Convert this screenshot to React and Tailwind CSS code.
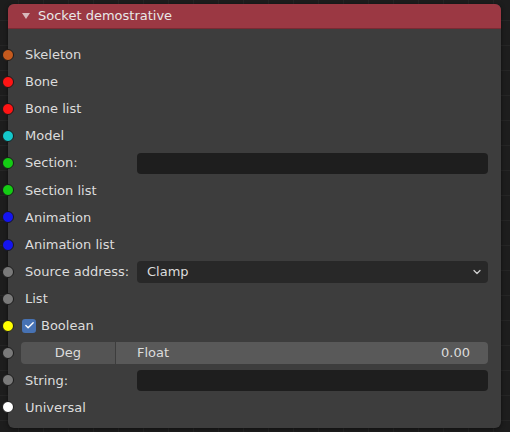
import { ChevronDown, Check } from 'lucide-react'

const rows = [
  { label: 'Skeleton', color: '#c65a1e' },
  { label: 'Bone', color: '#ff1414' },
  { label: 'Bone list', color: '#ff1414' },
  { label: 'Model', color: '#14c8cc' },
  { label: 'Section:', color: '#14cc14', field: 'text' },
  { label: 'Section list', color: '#14cc14' },
  { label: 'Animation', color: '#1414f0' },
  { label: 'Animation list', color: '#1414f0' },
  { label: 'Source address:', color: '#7a7a7a', field: 'select' },
  { label: 'List', color: '#7a7a7a' },
  { label: 'Boolean', color: '#ffff00', field: 'bool' },
  { label: '', color: '#7a7a7a', field: 'float' },
  { label: 'String:', color: '#7a7a7a', field: 'text' },
  { label: 'Universal', color: '#ffffff' },
]

function Socket({ color }) {
  return (
    <span
      className="absolute left-[-6px] top-1/2 -translate-y-1/2 w-[12px] h-[12px] rounded-full border border-[#1a1a1a]"
      style={{ backgroundColor: color }}
    />
  )
}

function Row({ row }) {
  return (
    <div className="relative h-[27.15px] flex items-center pl-[17px] pr-[13px]">
      <Socket color={row.color} />
      {row.field === 'bool' ? (
        <div className="flex items-center gap-[5px] ml-[-3px]">
          <span className="w-[14px] h-[14px] rounded-[3px] bg-[#4772b3] flex items-center justify-center">
            <Check size={11} strokeWidth={3} className="text-white" />
          </span>
          <span>{row.label}</span>
        </div>
      ) : row.field === 'float' ? (
        <div className="flex-1 h-[22px] ml-[-4px] flex rounded-[4px] overflow-hidden">
          <div className="w-[95px] bg-[#545454] flex items-center justify-center border-r border-[#3d3d3d]">Deg</div>
          <div className="flex-1 bg-[#595959] flex items-center justify-between pl-[21px] pr-[18px]">
            <span>Float</span>
            <span>0.00</span>
          </div>
        </div>
      ) : (
        <>
          <span className="w-[112px] shrink-0">{row.label}</span>
          {row.field === 'text' && (
            <div className="flex-1 h-[21px] rounded-[4px] bg-[#1e1e1e]" />
          )}
          {row.field === 'select' && (
            <div className="flex-1 h-[22px] rounded-[4px] bg-[#282828] flex items-center justify-between pl-[10px] pr-[5px]">
              <span>Clamp</span>
              <ChevronDown size={12} strokeWidth={2.5} className="text-[#d0d0d0]" />
            </div>
          )}
        </>
      )}
    </div>
  )
}

export default function App() {
  return (
    <div
      className="w-[510px] h-[432px] bg-[#1d1d1d] pt-[4px] pl-[8px] overflow-hidden bg-[linear-gradient(to_right,#252525_1px,transparent_1px),linear-gradient(to_bottom,#252525_1px,transparent_1px)] bg-[size:25px_25px] bg-[position:18px_20px]"
      style={{ fontFamily: '"DejaVu Sans", sans-serif' }}
    >
      <div className="w-[493px] h-[424px] rounded-[6px] bg-[#3d3d3d] text-[13px] text-[#dcdcdc] shadow-[0_1px_4px_rgba(0,0,0,0.5)]">
        <div className="h-[25px] rounded-t-[6px] bg-[#9b3843] flex items-center pl-[14px] gap-[8px] text-[#e8e8e8] border-b border-[#7a2a33]">
          <span className="w-0 h-0 border-l-[4px] border-r-[4px] border-t-[6px] border-l-transparent border-r-transparent border-t-[#d8b8bc]" />
          <span>Socket demostrative</span>
        </div>
        <div className="pt-[12px]">
          {rows.map((r, i) => (
            <Row key={i} row={r} />
          ))}
        </div>
      </div>
    </div>
  )
}
